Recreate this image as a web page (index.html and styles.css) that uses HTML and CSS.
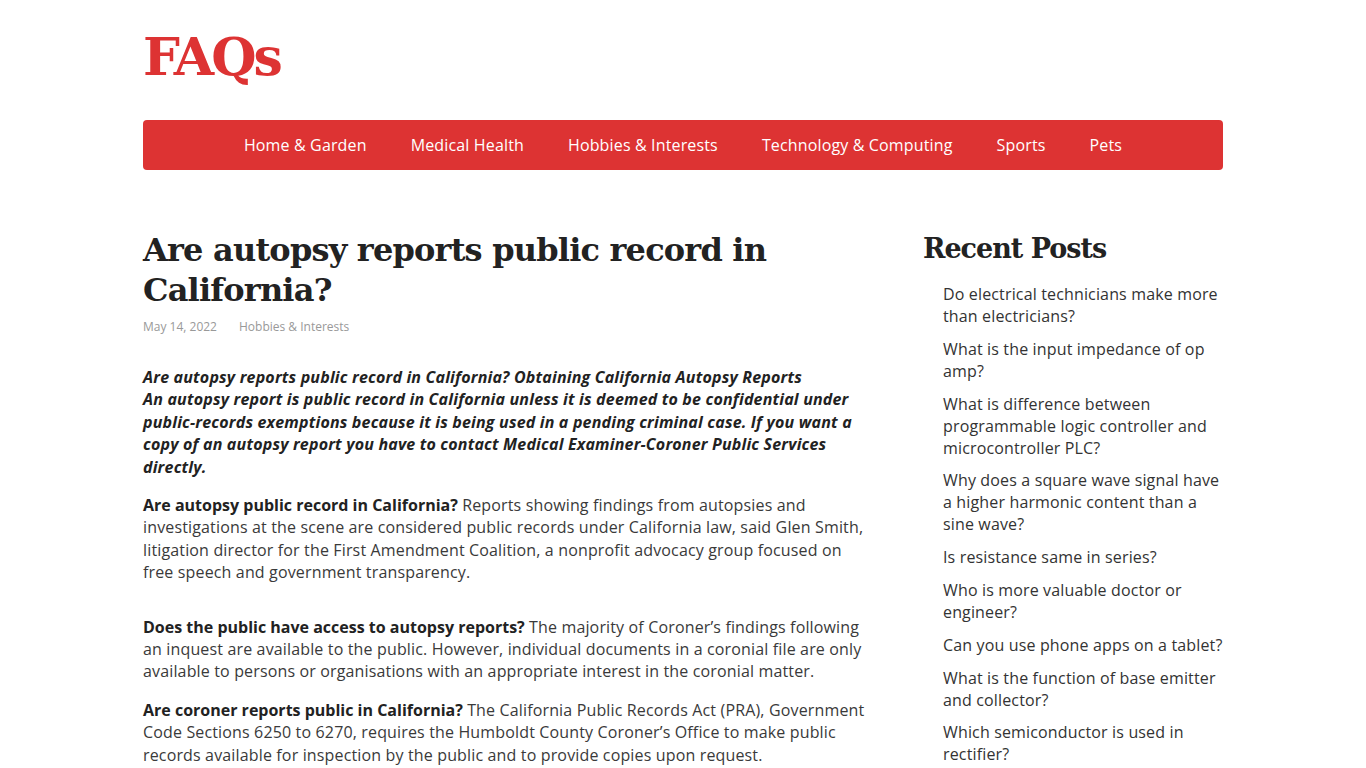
FILE: index.html
```html
<!DOCTYPE html>
<html lang="en">
<head>
<meta charset="utf-8">
<title>Are autopsy reports public record in California?</title>
<link rel="stylesheet" href="styles.css">
</head>
<body>
<div class="container">
  <header class="site-header">
    <a class="logo" href="#">FAQs</a>
  </header>
  <nav class="main-nav">
    <a href="#">Home &amp; Garden</a>
    <a href="#">Medical Health</a>
    <a href="#">Hobbies &amp; Interests</a>
    <a href="#">Technology &amp; Computing</a>
    <a href="#">Sports</a>
    <a href="#">Pets</a>
  </nav>
  <div class="content">
    <main class="article">
      <h1 class="title">Are autopsy reports public record in California?</h1>
      <div class="meta"><span>May 14, 2022</span><a href="#">Hobbies &amp; Interests</a></div>
      <p class="intro"><strong><em>Are autopsy reports public record in California? Obtaining California Autopsy Reports<br>An autopsy report is public record in California unless it is deemed to be confidential under public-records exemptions because it is being used in a pending criminal case. If you want a copy of an autopsy report you have to contact Medical Examiner-Coroner Public Services directly.</em></strong></p>
      <p><strong>Are autopsy public record in California?</strong> Reports showing findings from autopsies and investigations at the scene are considered public records under California law, said Glen Smith, litigation director for the First Amendment Coalition, a nonprofit advocacy group focused on free speech and government transparency.</p>
      <p class="spaced"><strong>Does the public have access to autopsy reports?</strong> The majority of Coroner’s findings following an inquest are available to the public. However, individual documents in a coronial file are only available to persons or organisations with an appropriate interest in the coronial matter.</p>
      <p><strong>Are coroner reports public in California?</strong> The California Public Records Act (PRA), Government Code Sections 6250 to 6270, requires the Humboldt County Coroner’s Office to make public records available for inspection by the public and to provide copies upon request.</p>
    </main>
    <aside class="sidebar">
      <h2 class="widget-title">Recent Posts</h2>
      <ul class="recent">
        <li><a href="#">Do electrical technicians make more than electricians?</a></li>
        <li><a href="#">What is the input impedance of op amp?</a></li>
        <li><a href="#">What is difference between programmable logic controller and microcontroller PLC?</a></li>
        <li><a href="#">Why does a square wave signal have a higher harmonic content than a sine wave?</a></li>
        <li><a href="#">Is resistance same in series?</a></li>
        <li><a href="#">Who is more valuable doctor or engineer?</a></li>
        <li><a href="#">Can you use phone apps on a tablet?</a></li>
        <li><a href="#">What is the function of base emitter and collector?</a></li>
        <li><a href="#">Which semiconductor is used in rectifier?</a></li>
      </ul>
    </aside>
  </div>
</div>
</body>
</html>
```
FILE: styles.css
```css
html, body {
  margin: 0;
  padding: 0;
  background: #ffffff;
}
body {
  font-family: "Open Sans", "Liberation Sans", sans-serif;
  font-size: 16px;
  color: #333333;
  letter-spacing: 0.15px;
}
a {
  text-decoration: none;
  color: inherit;
}
.container {
  width: 1080px;
  margin: 0 auto;
}
.site-header {
  height: 120px;
  box-sizing: border-box;
  padding-top: 22px;
}
.logo {
  font-family: "DejaVu Serif", "Liberation Serif", serif;
  font-weight: bold;
  font-size: 52px;
  line-height: 70px;
  color: #dd3333;
  letter-spacing: -3px;
}
.main-nav {
  height: 50px;
  background: #dd3333;
  border-radius: 4px;
  display: flex;
  justify-content: center;
  align-items: center;
}
.main-nav a {
  color: #ffffff;
  padding: 0 22px;
  font-size: 16px;
  line-height: 50px;
}
.content {
  display: flex;
  justify-content: space-between;
  padding-top: 60px;
}
.article {
  width: 722px;
}
.title {
  font-family: "DejaVu Serif", "Liberation Serif", serif;
  font-weight: bold;
  font-size: 32px;
  line-height: 40px;
  color: #222222;
  margin: 0;
  letter-spacing: -0.8px;
}
.meta {
  font-size: 12px;
  color: #999999;
  margin-top: 7px;
  line-height: 20px;
  letter-spacing: 0;
  display: flex;
  gap: 22px;
}
.article p {
  margin: 0 0 16px;
  line-height: 22.4px;
  color: #3a3a3a;
}
.article p strong {
  color: #222222;
  letter-spacing: 0;
}
.article p.intro {
  margin-top: 29px;
}
.article p.intro strong {
  letter-spacing: 0.18px;
}
.article p.spaced {
  margin-top: 32px;
}
.sidebar {
  width: 300px;
}
.widget-title {
  font-family: "DejaVu Serif", "Liberation Serif", serif;
  font-weight: bold;
  font-size: 27px;
  line-height: 34px;
  color: #222222;
  margin: 0 0 17px;
  padding-top: 2px;
  letter-spacing: -1px;
}
.recent {
  list-style: none;
  margin: 0;
  padding: 0 0 0 20px;
}
.recent li {
  line-height: 22px;
  margin-bottom: 10.8px;
  color: #333333;
}
```
